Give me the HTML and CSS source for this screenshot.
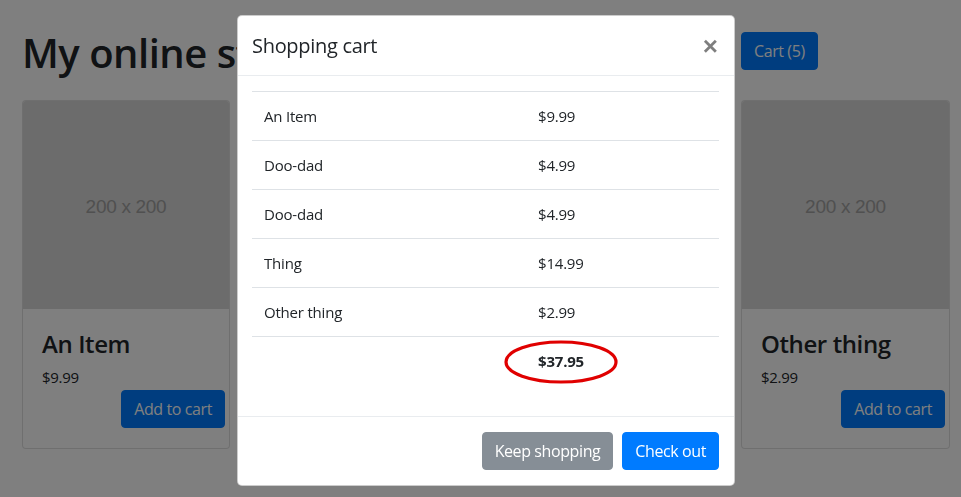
FILE: index.html
```html
<!DOCTYPE html>
<html lang="en">
<head>
<meta charset="utf-8">
<title>My online store</title>
<link rel="stylesheet" href="styles.css">
</head>
<body>
<div class="page">
  <header class="top">
    <h1 class="store-title">My online store</h1>
    <button class="btn btn-primary cart-btn">Cart (5)</button>
  </header>
  <main class="cards">
    <div class="card">
      <div class="thumb">200 x 200</div>
      <div class="card-body">
        <h4 class="card-title">An Item</h4>
        <p class="price">$9.99</p>
        <div class="actions"><button class="btn btn-primary">Add to cart</button></div>
      </div>
    </div>
    <div class="card">
      <div class="thumb">200 x 200</div>
      <div class="card-body">
        <h4 class="card-title">Doo-dad</h4>
        <p class="price">$4.99</p>
        <div class="actions"><button class="btn btn-primary">Add to cart</button></div>
      </div>
    </div>
    <div class="card">
      <div class="thumb">200 x 200</div>
      <div class="card-body">
        <h4 class="card-title">Thing</h4>
        <p class="price">$14.99</p>
        <div class="actions"><button class="btn btn-primary">Add to cart</button></div>
      </div>
    </div>
    <div class="card">
      <div class="thumb">200 x 200</div>
      <div class="card-body">
        <h4 class="card-title">Other thing</h4>
        <p class="price">$2.99</p>
        <div class="actions"><button class="btn btn-primary">Add to cart</button></div>
      </div>
    </div>
  </main>
</div>

<div class="backdrop"></div>
<div class="modal-wrap">
  <div class="modal">
    <div class="modal-header">
      <h5 class="modal-title">Shopping cart</h5>
      <button class="close" aria-label="Close">&times;</button>
    </div>
    <div class="modal-body">
      <table class="table">
        <tbody>
          <tr><td class="c-name">An Item</td><td>$9.99</td></tr>
          <tr><td class="c-name">Doo-dad</td><td>$4.99</td></tr>
          <tr><td class="c-name">Doo-dad</td><td>$4.99</td></tr>
          <tr><td class="c-name">Thing</td><td>$14.99</td></tr>
          <tr><td class="c-name">Other thing</td><td>$2.99</td></tr>
          <tr class="total-row"><td class="c-name"></td><td><span class="total">$37.95</span></td></tr>
        </tbody>
      </table>
    </div>
    <div class="modal-footer">
      <button class="btn btn-secondary">Keep shopping</button>
      <button class="btn btn-primary">Check out</button>
    </div>
    <svg class="ring" width="120" height="48" viewBox="0 0 120 48" aria-hidden="true">
      <ellipse cx="60" cy="24" rx="55" ry="20" fill="none" stroke="#e00000" stroke-width="3.2"/>
    </svg>
  </div>
</div>
</body>
</html>
```

FILE: styles.css
```css
* { box-sizing: border-box; }

html, body {
  margin: 0;
  padding: 0;
  background: #ffffff;
  font-family: "Open Sans", "Noto Sans", sans-serif;
  font-size: 16px;
  line-height: 1.5;
  color: #212529;
  overflow: hidden;
}

.page {
  padding: 0 11px 0 22px;
}

.top,
.cards {
  display: grid;
  grid-template-columns: 208px 209px 209px 209px;
  column-gap: 31px;
}

.top {
  padding-top: 29px;
  align-items: start;
}

.store-title {
  grid-column: 1 / span 3;
  margin: 0;
  font-size: 40px;
  font-weight: 600;
  line-height: 48px;
  letter-spacing: -0.5px;
  white-space: nowrap;
}

.cart-btn {
  justify-self: start;
  margin-top: 3px;
}

.btn {
  display: inline-block;
  font-family: inherit;
  font-size: 16px;
  line-height: 24px;
  padding: 6px 12px;
  border: 1px solid transparent;
  border-radius: 4px;
  cursor: pointer;
  letter-spacing: -0.4px;
}

.btn-primary {
  background: #007bff;
  border-color: #007bff;
  color: #ffffff;
}

.btn-secondary {
  background: #868e96;
  border-color: #868e96;
  color: #ffffff;
}

.cards {
  margin-top: 23px;
}

.card {
  border: 1px solid rgba(0, 0, 0, 0.125);
  border-radius: 4px;
  background: #ffffff;
  overflow: hidden;
  height: 349px;
}

.thumb {
  height: 208px;
  background: #d8d8d8;
  color: #a0a0a0;
  font-family: "Liberation Sans", Arial, sans-serif;
  font-size: 19px;
  letter-spacing: -0.3px;
  padding-top: 4px;
  display: flex;
  align-items: center;
  justify-content: center;
}

.card-body {
  padding: 20px 4px 20px 19px;
}

.card-title {
  margin: 0 0 7px;
  font-size: 24px;
  font-weight: 600;
  line-height: 29px;
  letter-spacing: -0.4px;
}

.price {
  margin: 0;
  font-size: 15px;
  line-height: 24px;
  letter-spacing: -0.3px;
}

.actions {
  display: flex;
  justify-content: flex-end;
  margin-top: 1px;
}

.backdrop {
  position: fixed;
  inset: 0;
  background: rgba(0, 0, 0, 0.5);
}

.modal-wrap {
  position: fixed;
  inset: 0;
  padding: 15px 0 0 237px;
}

.modal {
  position: relative;
  width: 498px;
  background: #ffffff;
  border: 1px solid rgba(0, 0, 0, 0.2);
  border-radius: 5px;
}

.modal-header {
  display: flex;
  align-items: flex-start;
  justify-content: space-between;
  padding: 15px 15px 14px 14px;
  border-bottom: 1px solid #e9ecef;
}

.modal-title {
  margin: 0;
  font-size: 20px;
  font-weight: 500;
  line-height: 30px;
  letter-spacing: -0.3px;
}

.close {
  background: none;
  border: 0;
  padding: 0;
  margin: 0 1px 0 0;
  font-family: "Liberation Sans", Arial, sans-serif;
  font-size: 26px;
  font-weight: 700;
  line-height: 30px;
  color: #000000;
  opacity: 0.5;
  cursor: pointer;
}

.modal-body {
  padding: 15px 15px 15px 14px;
}

.table {
  width: 100%;
  border-collapse: collapse;
  margin-bottom: 16px;
}

.table td {
  padding: 12px;
  border-top: 1px solid #dee2e6;
  font-size: 15px;
  line-height: 24px;
  letter-spacing: -0.2px;
  vertical-align: top;
}

.c-name {
  width: 274px;
}

.total {
  font-weight: 700;
}

.modal-footer {
  display: flex;
  justify-content: flex-end;
  gap: 9px;
  padding: 15px;
  border-top: 1px solid #e9ecef;
}

.ring {
  position: absolute;
  left: 263px;
  top: 322px;
}
```
